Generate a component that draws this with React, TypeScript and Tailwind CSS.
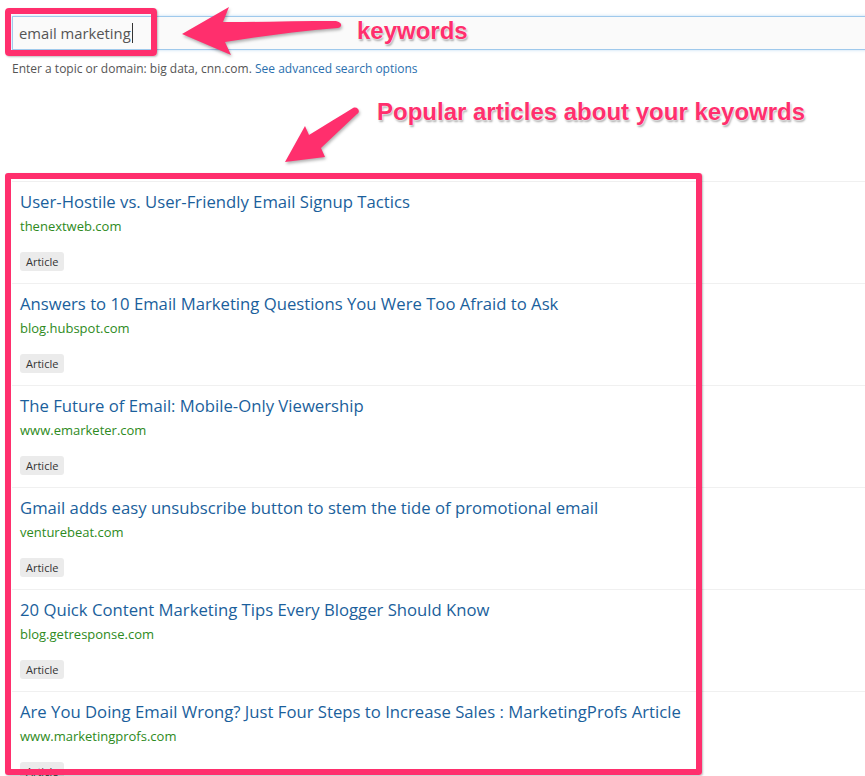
import React from "react";

const rows = [
  { title: "User-Hostile vs. User-Friendly Email Signup Tactics", domain: "thenextweb.com" },
  { title: "Answers to 10 Email Marketing Questions You Were Too Afraid to Ask", domain: "blog.hubspot.com" },
  { title: "The Future of Email: Mobile-Only Viewership", domain: "www.emarketer.com" },
  { title: "Gmail adds easy unsubscribe button to stem the tide of promotional email", domain: "venturebeat.com" },
  { title: "20 Quick Content Marketing Tips Every Blogger Should Know", domain: "blog.getresponse.com" },
  { title: "Are You Doing Email Wrong? Just Four Steps to Increase Sales : MarketingProfs Article", domain: "www.marketingprofs.com" },
];

export default function App() {
  return (
    <div className="relative w-[865px] h-[776px] overflow-hidden bg-white font-['Open_Sans',sans-serif]">
      <div className="flex flex-col pt-[16px] pl-[12px]">
        <div className="h-[34px] w-[880px] border border-[#9fc9ec] bg-[#fafafa] shadow-[0_0_3px_rgba(110,175,230,0.45)] flex items-center pl-[6px]">
          <span className="text-[14.8px] text-[#555] leading-[20px]">email marketing</span>
          <span className="ml-[1px] h-[20px] w-[1px] bg-[#333]" />
        </div>
        <div className="mt-[10px] text-[12px] leading-[18px] text-[#555]">
          Enter a topic or domain: big data, cnn.com.{" "}
          <span className="text-[#2a6fae]">See advanced search options</span>
        </div>
        <div className="mt-[103px] flex flex-col">
          {rows.map((r, i) => (
            <div key={i} className="flex flex-col items-start border-t border-[#f0f0f0] pl-[8px] pt-[9px] pb-[12px]">
              <div className="text-[16.7px] leading-[22px] text-[#1b5f9c]">{r.title}</div>
              <div className="mt-[3px] text-[13px] leading-[20px] text-[#2e8a22]">{r.domain}</div>
              <div className="mt-[16px] h-[19px] px-[6px] rounded-[3px] bg-[#ebebeb] text-[11px] leading-[19px] text-[#333]">
                Article
              </div>
            </div>
          ))}
        </div>
      </div>

      {/* annotation overlays */}
      <div className="absolute left-[5px] top-[8px] w-[152px] h-[48px] border-[6px] border-[#ff2f6d] rounded-[4px] shadow-[1px_1px_2px_rgba(0,0,0,0.25)]" />
      <div className="absolute left-[5px] top-[173px] w-[697px] h-[602px] border-[6px] border-[#ff2f6d] rounded-[3px] shadow-[1px_1px_2px_rgba(0,0,0,0.25)]" />

      <svg className="absolute left-0 top-0 pointer-events-none" width="865" height="776" viewBox="0 0 865 776">
        <g fill="#ff2f6d" style={{ filter: "drop-shadow(1px 2px 1.5px rgba(0,0,0,0.3))" }}>
          <path d="M182,34 L229,7 L223,22 C260,22 300,21 336,21 C342,22 343,27 338,28 C300,31 262,36 225,42 L231,55 Z" />
          <path d="M285,162 L305,126 L309,135 C325,125 340,116 353,108 C358,106 361,112 357,114 C345,125 333,137 321,148 L325,157 Z" />
        </g>
      </svg>

      <div className="absolute left-[357px] top-[17px] text-[24px] leading-[28px] font-bold text-[#ff2f6d] font-['Liberation_Sans',Arial,sans-serif] [text-shadow:0_0_2px_#fff,0_0_2px_#fff,1px_2px_2px_rgba(0,0,0,0.35)]">
        keywords
      </div>
      <div className="absolute left-[377px] top-[98px] text-[24px] leading-[28px] font-bold text-[#ff2f6d] font-['Liberation_Sans',Arial,sans-serif] [text-shadow:0_0_2px_#fff,0_0_2px_#fff,1px_2px_2px_rgba(0,0,0,0.35)]">
        Popular articles about your keyowrds
      </div>
    </div>
  );
}
